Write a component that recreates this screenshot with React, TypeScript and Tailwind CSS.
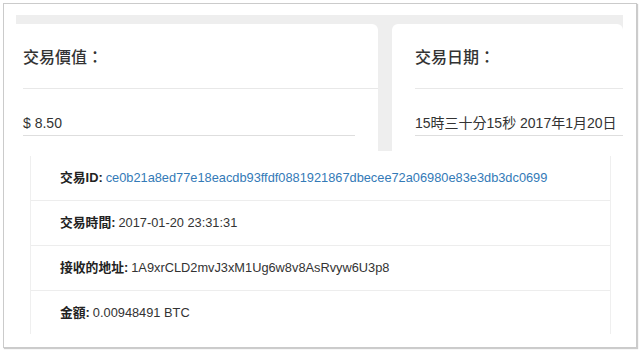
import React from 'react';

const font = { fontFamily: '"Liberation Sans", "Noto Sans CJK TC", sans-serif' };

const rows = [
  { label: '交易ID:', value: 'ce0b21a8ed77e18eacdb93ffdf0881921867dbecee72a06980e83e3db3dc0699', link: true },
  { label: '交易時間:', value: '2017-01-20 23:31:31' },
  { label: '接收的地址:', value: '1A9xrCLD2mvJ3xM1Ug6w8v8AsRvyw6U3p8' },
  { label: '金額:', value: '0.00948491 BTC' },
];

function Field({ title, value, className }: { title: string; value: string; className: string }) {
  return (
    <div className={`bg-white shrink-0 ${className}`}>
      {/* Title */}
      <div className="h-[65px] pt-[4px] flex items-center border-b border-[#e8e8e8]">
        <span className="text-[16px] font-medium text-[#333] whitespace-nowrap">{title}</span>
      </div>
      {/* Value */}
      <div className="pt-[24px]">
        <div className="border-b border-[#dedede] pb-[2px] text-[14px] leading-[20px] text-[#333] whitespace-nowrap">
          {value}
        </div>
      </div>
    </div>
  );
}

export default function App() {
  return (
    <div className="w-[640px] h-[352px] bg-white overflow-hidden" style={font}>
      <div className="mt-[3px] ml-[3px] w-[634px] h-[345px] bg-white border border-[#cbcbcb] shadow-[1px_1px_1px_rgba(0,0,0,0.2)]">
        {/* Top cards */}
        <div className="pt-[11px] pl-[12px]">
          <div className="w-[607px] h-[136px] bg-[#eeeeee] pt-[9px] flex gap-[14px] overflow-hidden">
            <Field title="交易價值：" value="$ 8.50" className="w-[362px] h-[200px] rounded-tr-[6px] pl-[7px] [&>div:last-child]:pr-[23px]" />
            <Field title="交易日期：" value="15時三十分15秒 2017年1月20日" className="w-[231px] h-[200px] rounded-t-[6px] pl-[23px]" />
          </div>
        </div>

        {/* Transaction list */}
        <div className="mt-[5px] ml-[26px] w-[581px] border-x border-[#efefef]">
          {rows.map((r, i) => (
            <div
              key={r.label}
              className={`flex items-center pl-[29px] text-[12.8px] text-[#333] whitespace-nowrap ${
                i < rows.length - 1 ? 'h-[45px] border-b border-[#ededed]' : 'h-[43px]'
              }`}
            >
              <span className="font-bold text-[#222]">{r.label}</span>
              <span className={`ml-[3px] ${r.link ? 'text-[#337ab7]' : ''}`}>{r.value}</span>
            </div>
          ))}
        </div>
      </div>
    </div>
  );
}
